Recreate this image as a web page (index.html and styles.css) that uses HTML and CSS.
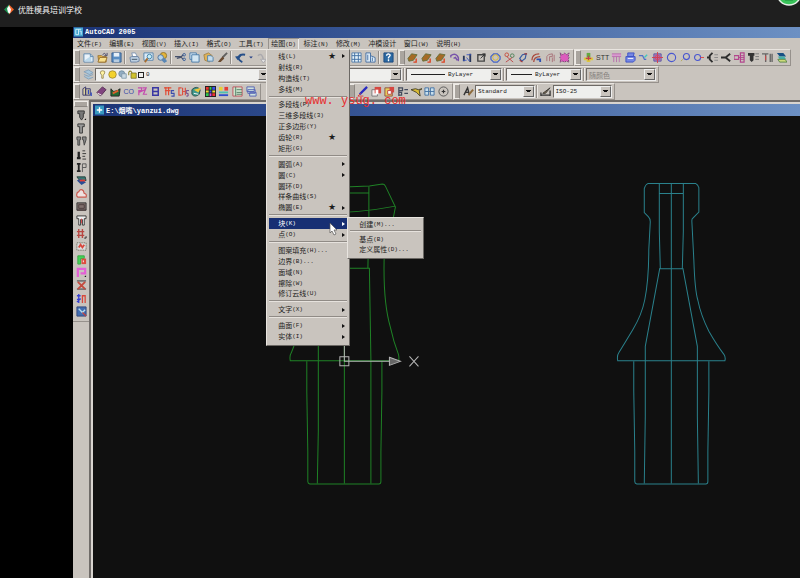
FILE: index.html
```html
<!DOCTYPE html>
<html lang="zh-CN">
<head>
    <meta charset="UTF-8">
    <meta name="viewport" content="width=device-width, initial-scale=1.0">
    <title>优胜模具培训学校</title>
    <link rel="stylesheet" href="styles.css">
</head>
<body>
    <header class="player-bar">
        <svg class="logo" viewBox="0 0 10 10"><path d="M5 0L0 5l5 5z" fill="#1c8f4d"/><path d="M5 0l5 5-5 5z" fill="#f0642a"/><path d="M5 1L3 4l1 4 2 1 1-4z" fill="#fff"/></svg>
        <h1>优胜模具培训学校</h1>
        <svg class="badge" viewBox="0 0 26 26"><circle cx="13" cy="13" r="12" fill="#39c35a" stroke="#e4efe6" stroke-width="1.5"/><path d="M9 20h8" stroke="#1f8a3a"/></svg>
    </header>

    <main class="app">
        <div class="title-bar">
            <svg class="app-icon" viewBox="0 0 10 10"><path d="M0 0h10v10H0z" fill="#43a4cf"/><path d="M2 2h3v6H2zM6 4h2v4M5 2h3" fill="none" stroke="#d8f3ff"/></svg>
            <span>AutoCAD 2005</span>
        </div>

        <nav class="menu-bar">
            <button>文件<small>(F)</small></button>
            <button>编辑<small>(E)</small></button>
            <button>视图<small>(V)</small></button>
            <button>插入<small>(I)</small></button>
            <button>格式<small>(O)</small></button>
            <button>工具<small>(T)</small></button>
            <div class="menu-anchor">
                <button class="open">绘图<small>(D)</small></button>
                <div class="menu draw-menu">
                    <button class="sub">线<small>(L)</small><i class="star">★</i></button>
                    <button>射线<small>(R)</small></button>
                    <button>构造线<small>(T)</small></button>
                    <button>多线<small>(M)</small></button>
                    <hr>
                    <button>多段线<small>(P)</small></button>
                    <button>三维多段线<small>(3)</small></button>
                    <button>正多边形<small>(Y)</small></button>
                    <button>齿轮<small>(R)</small><i class="star">★</i></button>
                    <button>矩形<small>(G)</small></button>
                    <hr>
                    <button class="sub">圆弧<small>(A)</small></button>
                    <button class="sub">圆<small>(C)</small></button>
                    <button>圆环<small>(D)</small></button>
                    <button>样条曲线<small>(S)</small></button>
                    <button class="sub">椭圆<small>(E)</small><i class="star">★</i></button>
                    <hr>
                    <button class="sub active">块<small>(K)</small></button>
                    <button class="sub">点<small>(O)</small></button>
                    <hr>
                    <button>图案填充<small>(H)...</small></button>
                    <button>边界<small>(B)...</small></button>
                    <button>面域<small>(N)</small></button>
                    <button>擦除<small>(W)</small></button>
                    <button>修订云线<small>(U)</small></button>
                    <hr>
                    <button class="sub">文字<small>(X)</small></button>
                    <hr>
                    <button class="sub">曲面<small>(F)</small></button>
                    <button class="sub">实体<small>(I)</small></button>
                    <div class="menu block-menu">
                        <button>创建<small>(M)...</small></button>
                        <hr>
                        <button>基点<small>(B)</small></button>
                        <button>定义属性<small>(D)...</small></button>
                    </div>
                    <svg class="pointer" viewBox="0 0 9 14"><path d="M1 1v10l2-2 2 4 2-1-2-4h3z" fill="#fff" stroke="#555" stroke-width=".7"/></svg>
                </div>
            </div>
            <button>标注<small>(N)</small></button>
            <button>修改<small>(M)</small></button>
            <button>冲模设计</button>
            <button>窗口<small>(W)</small></button>
            <button>说明<small>(H)</small></button>
        </nav>

        <div class="toolbar-row">
            <div class="toolbar standard">
                <button aria-label="新建"><svg viewBox="0 0 12 12"><path d="M1 2h7l3 3v6H1z" fill="#eaf3fa" stroke="#5c87ad"/><path d="M2 9l7-5v6H2z" fill="#b9d8eb"/><path d="M8 2v3h3" stroke="#5c87ad"/></svg></button>
                <button aria-label="打开"><svg viewBox="0 0 12 12"><path d="M1 4h4l1 1h4v6H2z" fill="#e9b649" stroke="#9b7432"/><path d="M3 6h8l-2 5H1z" fill="#f8df8c" stroke="#9b7432"/><path d="M6 3q2-3 4 0M11 1v3H8" stroke="#446"/></svg></button>
                <button aria-label="保存"><svg viewBox="0 0 12 12"><path d="M1 1h10v10H1z" fill="#5b8fc4" stroke="#385f91"/><path d="M3 1h6v4H3z" fill="#e6f0f8"/><path d="M3 8h6v3H3z" fill="#b8cce0"/></svg></button>
                <b class="sep"></b>
                <button aria-label="打印"><svg viewBox="0 0 12 12"><path d="M3 1h4l2 4H4z" fill="#fff" stroke="#7e95b3"/><path d="M1 6l2-1h7l1 2v3l-3 1H2z" fill="#bed0e2" stroke="#6a83a4"/><path d="M3 8h6" stroke="#456"/></svg></button>
                <button aria-label="预览"><svg viewBox="0 0 12 12"><path d="M1 1h10v8H1z" fill="#dceaf5" stroke="#5483ad"/><circle cx="7" cy="5" r="2.5" fill="#c6edf7" stroke="#4381aa"/><path d="M5 7l-3 4" stroke="#a56d31" stroke-width="2"/></svg></button>
                <button aria-label="发布"><svg viewBox="0 0 12 12"><circle cx="7" cy="4" r="3.5" fill="#e5b438" stroke="#8f752e"/><circle cx="4" cy="6" r="3" fill="#b4d3ec" stroke="#4e7199"/><path d="M5 9l3-3 3 4-3 2z" fill="#5a87b5"/></svg></button>
                <b class="sep"></b>
                <button aria-label="剪切"><svg viewBox="0 0 12 12"><path d="M0 5h6l3 3M2 7l4-1 3-3" stroke="#46516c" stroke-width="1.3"/><circle cx="10" cy="3" r="1.4" stroke="#375d99"/><circle cx="10" cy="8" r="1.4" stroke="#375d99"/></svg></button>
                <button aria-label="复制"><svg viewBox="0 0 12 12"><path d="M1 1h7v7H1z" fill="#dceaf5" stroke="#477aa8"/><path d="M3 3h8v8H3z" fill="#d2e5f2" stroke="#477aa8"/></svg></button>
                <button aria-label="粘贴"><svg viewBox="0 0 12 12"><path d="M1 3l5-2 4 3-3 7-5-2z" fill="#e0b359" stroke="#a5854b"/><path d="M5 4h4l2 2v4H5z" fill="#c5dcec" stroke="#5483ad"/></svg></button>
                <button aria-label="特性匹配"><svg viewBox="0 0 12 12"><path d="M11 1L6 6" stroke="#61605f" stroke-width="2"/><path d="M6 5l2 2-4 4H1q2-3 5-6z" fill="#6b4b31"/></svg></button>
                <b class="sep"></b>
                <button aria-label="放弃"><svg viewBox="0 0 12 12"><path d="M8 11Q3 9 4 5q2-3 7-2" stroke="#264f89" stroke-width="2"/><path d="M0 5l7-1-4 5z" fill="#264f89"/></svg></button>
                <button class="narrow" aria-label="放弃列表"><svg viewBox="0 0 6 12"><path d="M1 5h4L3 7z" fill="#223f87"/></svg></button>
                <button aria-label="重做"><svg viewBox="0 0 12 12"><path d="M2 4q5-4 6 5" stroke="#aaa9ad" stroke-width="1.5"/><path d="M5 8h6l-3 4z" fill="#e3e2e2" stroke="#aaa9ad"/></svg></button>
                <span class="fill"></span>
                <button aria-label="设计中心"><svg viewBox="0 0 12 12"><path d="M1 1h10v10H1z" fill="#e6f2fa" stroke="#557eaa"/><path d="M1 4h10M1 8h10M4 1v10M8 1v10" stroke="#3f6da1"/></svg></button>
                <button aria-label="工具选项板"><svg viewBox="0 0 12 12"><path d="M1 1h5v10H1zM6 4l5 2v5H6" fill="#deecf7" stroke="#446fa3"/><path d="M3 3v6M8 6v4" stroke="#446fa3"/></svg></button>
                <b class="sep"></b>
                <button aria-label="帮助"><svg viewBox="0 0 12 12"><path d="M1 1h10v10H1z" fill="#2b69a3" stroke="#1d487c"/><path d="M4 4q0-2 2-2 3 1 1 3L6 6v1M6 8v2" stroke="#fff" stroke-width="1.5"/></svg></button>
            </div>
            <div class="toolbar solids">
                <button aria-label="拉伸面"><svg viewBox="0 0 12 12"><path d="M1 7l4-5 6 1-4 6-5 1z" fill="#a66a25" stroke="#66713d"/><path d="M10 7v4H7" stroke="#dc4221" stroke-width="1.5"/></svg></button>
                <button aria-label="移动面"><svg viewBox="0 0 12 12"><path d="M1 7l4-5 6 1-4 6-5 1z" fill="#a66a25" stroke="#66713d"/><path d="M10 7v4H7" stroke="#dc4221" stroke-width="1.5"/></svg></button>
                <button aria-label="偏移面"><svg viewBox="0 0 12 12"><path d="M1 7l4-5 6 1-4 6-5 1z" fill="#a66a25" stroke="#66713d"/><path d="M10 7v4H7" stroke="#dc4221" stroke-width="1.5"/></svg></button>
                <button aria-label="圆角"><svg viewBox="0 0 12 12"><path d="M2 6V4q4-3 7 0 2 2 1 6M9 9L7 6 5 7" stroke="#7753aa" stroke-width="1.5"/></svg></button>
                <button aria-label="镜像"><svg viewBox="0 0 12 12"><path d="M2 4v6M9 2v9" stroke="#29375a" stroke-width="2"/><path d="M1 9h4M5 3h5M5 6l3 4" stroke="#3a55bf"/></svg></button>
                <button aria-label="缩放"><svg viewBox="0 0 12 12"><path d="M2 3h7v7H2z" stroke="#444" stroke-width="1.5"/><path d="M5 7l5-5M7 2h3v3" stroke="#333"/></svg></button>
                <button aria-label="八边形"><svg viewBox="0 0 12 12"><path d="M4 2h4l3 3v3l-3 3H4L1 8V5z" stroke="#4563c5" stroke-width="1.3"/><circle cx="6" cy="6" r="3" stroke="#d6b62e"/></svg></button>
                <button aria-label="修剪"><svg viewBox="0 0 12 12"><circle cx="3" cy="3" r="2" stroke="#c74d3b"/><circle cx="9" cy="4" r="2" stroke="#4b8156"/><path d="M3 5l7 6M9 6l-7 5" stroke="#bd4646"/></svg></button>
                <button aria-label="旋转"><svg viewBox="0 0 12 12"><path d="M3 7l3-4 4-1-1 5-4 3z" stroke="#385ca2" stroke-width="1.3"/><path d="M8 2h3M3 9l3 2" stroke="#a43b3b" stroke-width="1.3"/></svg></button>
                <button aria-label="偏移"><svg viewBox="0 0 12 12"><path d="M1 9q0-7 8-7M3 11q0-6 7-6" stroke="#a9493d" stroke-width="1.4"/><path d="M6 8h4v3" stroke="#2e51b0" stroke-width="2"/></svg></button>
                <button aria-label="阵列"><svg viewBox="0 0 12 12"><path d="M2 10V5q1-3 6-3v3H5v5M8 6v5M10 3v7" stroke="#a77177"/></svg></button>
                <button aria-label="分解"><svg viewBox="0 0 12 12"><path d="M1 1l3 2 2-2 2 2 3-2-1 4 1 1-1 2 1 3-3-1-2 1-2-1-3 1 1-3-1-2 1-2z" fill="#dc5bbd" stroke="#71446d" stroke-dasharray="2 1"/></svg></button>
            </div>
            <div class="toolbar dies">
                <button aria-label="模座"><svg viewBox="0 0 12 12"><path d="M1 6h10v3H8v2H4V9H1z" fill="#dcc940"/><path d="M4 1h4v5H4z" fill="#65a942"/><path d="M3 7h6M6 4v5" stroke="#c3404b" stroke-width="1.4"/></svg></button>
                <button class="stt">STT</button>
                <button aria-label="排样"><svg viewBox="0 0 12 12"><path d="M1 2h10v3H1z" fill="#d99bd0"/><path d="M1 2h10M1 5h10M3 5v6M6 5v6M9 5v6" stroke="#b96eae"/></svg></button>
                <button aria-label="出图"><svg viewBox="0 0 12 12"><path d="M3 1h7L9 5H3zM1 5h10v4l-2 2H1z" fill="#7587e4" stroke="#3d52c4"/><path d="M3 7h6" stroke="#fff"/></svg></button>
                <button aria-label="折弯"><svg viewBox="0 0 12 12"><path d="M1 4h4l2 4h2" stroke="#526fc8" stroke-width="1.3"/><path d="M7 6l3-3" stroke="#40c8be" stroke-width="1.5"/></svg></button>
                <button aria-label="孔表"><svg viewBox="0 0 12 12"><path d="M2 2h8v8H2z" fill="#b276b9" stroke="#5c5ea4"/><path d="M6 0v12M0 6h12" stroke="#d83c4b"/><path d="M4 4h4v4H4z" stroke="#c84a68"/></svg></button>
                <button aria-label="圆孔"><svg viewBox="0 0 12 12"><circle cx="6" cy="6" r="4.5" stroke="#4856d0" stroke-width="1.2"/></svg></button>
                <button aria-label="引线孔"><svg viewBox="0 0 12 12"><circle cx="7" cy="5" r="3.3" stroke="#4856d0" stroke-width="1.2"/><path d="M3 8l-2 2" stroke="#b2a952"/></svg></button>
                <button aria-label="销孔"><svg viewBox="0 0 12 12"><circle cx="5" cy="6" r="3.3" stroke="#4856d0" stroke-width="1.2"/><path d="M8 6h4" stroke="#d44"/></svg></button>
                <button aria-label="螺钉"><svg viewBox="0 0 12 12"><path d="M6 1L3 4v4l3 3M0 6h4" stroke="#2d2d2d" stroke-width="2"/><path d="M8 3h4M8 6h4M8 9h4" stroke="#888"/></svg></button>
                <button aria-label="弹簧"><svg viewBox="0 0 12 12"><path d="M10 2L5 6l5 4M0 6h7" stroke="#2d2d2d" stroke-width="2"/></svg></button>
                <button aria-label="导柱"><svg viewBox="0 0 12 12"><path d="M0 4h5v4H0zM7 1h4v10H7z" stroke="#b3458d" stroke-width="1.3"/><path d="M5 6h6M7 4h4M7 8h4" stroke="#b3458d"/></svg></button>
                <button aria-label="冲头"><svg viewBox="0 0 12 12"><path d="M0 1h7v3H6v5l-2 2-2-2V4H0z" fill="#333"/><path d="M8 2h4M8 5h4M8 8h4" stroke="#777"/></svg></button>
                <button aria-label="凸模"><svg viewBox="0 0 12 12"><path d="M0 2h7M4 2v9M9 2v9M11 2v9" stroke="#666" stroke-width="1.5"/><path d="M4 4v5" stroke="#d44"/></svg></button>
                <button aria-label="图层叠放"><svg viewBox="0 0 12 12"><path d="M1 1h7l3 4H4z" fill="#174f83"/><path d="M2 5h7l2 3H4z" fill="#45b0a9"/><path d="M2 8h8l2 3H4z" fill="#cddb7a" stroke="#598548"/></svg></button>
            </div>
        </div>

        <div class="toolbar-row">
            <div class="toolbar layers">
                <button aria-label="图层特性"><svg viewBox="0 0 12 12"><path d="M1 3l5-2 5 3-4 2zM1 6l5 2 5-2M1 8l5 3 5-2" fill="#a6c5db" stroke="#86a1b9"/></svg></button>
                <label class="combo layer-combo">
                    <svg viewBox="0 0 12 12"><path d="M6 1q4 0 3 3L7 7v4H5V7L3 4q0-3 3-3z" fill="#fff3a3" stroke="#8a7a48"/></svg>
                    <svg viewBox="0 0 12 12"><circle cx="6" cy="6" r="5" fill="#f3d22d" stroke="#9b812e"/></svg>
                    <svg viewBox="0 0 12 12"><circle cx="5" cy="5" r="4" fill="#92adc3" stroke="#6a8599"/><path d="M5 5h6v6H5z" fill="#cad9e3" stroke="#7891a4"/></svg>
                    <svg viewBox="0 0 12 12"><path d="M1 7V3q2-3 4 0v2" stroke="#8d8330" stroke-width="1.4"/><path d="M4 4h7v7H4z" fill="#d0c32d" stroke="#776e26"/></svg>
                    <b class="swatch"></b>
                    <select aria-label="图层"><option>0</option></select>
                </label>
            </div>
            <div class="toolbar properties">
                <label class="combo color-combo"><select aria-label="颜色"><option></option></select></label>
                <b class="sep"></b>
                <label class="combo type-combo"><span class="stroke"></span><select aria-label="线型"><option>ByLayer</option></select></label>
                <b class="sep"></b>
                <label class="combo weight-combo"><span class="stroke"></span><select aria-label="线宽"><option>ByLayer</option></select></label>
                <b class="sep"></b>
                <label class="combo plot-combo"><select aria-label="打印样式" disabled><option>随颜色</option></select></label>
            </div>
        </div>

        <div class="toolbar-row">
            <div class="toolbar die-tools">
                <button aria-label="图框"><svg viewBox="0 0 12 12"><path d="M1 3l3-2v9H1zM4 3h5v7H4z" fill="#dcd39e" stroke="#34336d"/><path d="M7 4v5M10 7v4" stroke="#334ac0" stroke-width="1.5"/></svg></button>
                <button aria-label="橡皮"><svg viewBox="0 0 12 12"><path d="M1 7l6-6 4 3-6 7z" fill="#80447f" stroke="#563053"/><path d="M2 8l4 2" stroke="#fff"/></svg></button>
                <button aria-label="图表"><svg viewBox="0 0 12 12"><path d="M1 3v8h9l1-8-3 2-4 1-2-2z" fill="#246b35" stroke="#222"/><path d="M3 8l6-3" stroke="#da5e2b" stroke-width="2"/></svg></button>
                <button class="co">CO</button>
                <button aria-label="文字"><svg viewBox="0 0 12 12"><path d="M1 2h4v3H2v5M6 2h4L7 9h4M2 7l7-3" stroke="#c34cae" stroke-width="1.3"/></svg></button>
                <button aria-label="胶片"><svg viewBox="0 0 12 12"><path d="M3 2h6v8H3zM3 6h6" stroke="#3936a3" stroke-width="1.6"/></svg></button>
                <button aria-label="冲裁"><svg viewBox="0 0 12 12"><path d="M0 2h8M1 5h6M2 1v9M5 1v9" stroke="#e04c35" stroke-width="1.3"/><path d="M11 5H8v3h3v3H8" stroke="#3b4cad" stroke-width="1.2"/></svg></button>
                <button aria-label="凹模"><svg viewBox="0 0 12 12"><path d="M4 2H1v8h3M5 2v8M8 2v8M5 6h3" stroke="#dd5040" stroke-width="1.3"/><path d="M12 5H9v3h2v3H9" stroke="#693f87"/></svg></button>
                <button aria-label="渲染"><svg viewBox="0 0 12 12"><path d="M1 4q5-5 9 0l-1 5q-5 4-8 0z" fill="#3f978c" stroke="#254d47"/><path d="M3 4l8-2-3 5z" fill="#edc63b"/><path d="M3 8l5 1" stroke="#fff"/></svg></button>
                <button aria-label="调色板"><svg viewBox="0 0 12 12"><path d="M0 0h12v12H0z" fill="#222"/><path d="M1 1h3v3H1zM8 8h3v3H8z" fill="#ed332f"/><path d="M5 1h2v3H5zM1 8h3v3H1z" fill="#2fc953"/><path d="M8 1h3v3H8zM5 5h2v2H5z" fill="#3950ef"/><path d="M1 5h3v2H1zM8 5h3v2H8z" fill="#efdb31"/><path d="M5 8h2v3H5z" fill="#dc48db"/></svg></button>
                <button aria-label="色条"><svg viewBox="0 0 12 12"><path d="M1 1h4v4H1z" fill="#e8cf35"/><path d="M7 1h4v4H7z" fill="#e33c35"/><path d="M1 7h10" stroke="#4ec0ae" stroke-width="2"/><path d="M1 10h10" stroke="#314ccc" stroke-width="2"/></svg></button>
                <button aria-label="明细表"><svg viewBox="0 0 12 12"><path d="M1 1h10v10H1z" fill="#cce3cd" stroke="#c34f5b"/><path d="M4 1v10M5 4h6M5 7h6M5 9h6" stroke="#547d65"/></svg></button>
                <button aria-label="窗口层叠"><svg viewBox="0 0 12 12"><path d="M1 1h8v5H1zM2 4h8v4H2zM4 7h7v4H4z" fill="#cfe2dd" stroke="#5362b5"/></svg></button>
            </div>
            <div class="toolbar edit-tools">
                <button aria-label="画笔"><svg viewBox="0 0 12 12"><path d="M11 1L3 9" stroke="#292ac0" stroke-width="2.5"/><path d="M1 11l3-3M1 11h6" stroke="#d63b39"/></svg></button>
                <button aria-label="复制块"><svg viewBox="0 0 12 12"><path d="M1 4h6v7H1z" fill="#f4eded" stroke="#777"/><path d="M4 1h7v7H4z" fill="#d54741"/><path d="M5 4h3v5H5z" fill="#fff"/></svg></button>
                <button aria-label="粘贴块"><svg viewBox="0 0 12 12"><path d="M1 2h8v9H1z" fill="#e5cd5c" stroke="#8d5140"/><path d="M6 1h5v6H6z" fill="#d54741"/><path d="M4 5h4v4H4z" fill="#fff" stroke="#b44"/></svg></button>
                <button aria-label="对齐"><svg viewBox="0 0 12 12"><path d="M2 1v10M2 2h4v3H2M2 7h3v3H2M8 4h4M8 8h4" stroke="#454c5d" stroke-width="1.4"/></svg></button>
                <button aria-label="拾取"><svg viewBox="0 0 12 12"><path d="M0 4l5-1 3 1 4-1-3 2 1 6-4-4z" fill="#d9bb36" stroke="#454129"/></svg></button>
                <button aria-label="对称"><svg viewBox="0 0 12 12"><path d="M1 2h4v8H1zM7 2h4v8H7zM1 6h10" fill="#c8dfed" stroke="#4472a3"/></svg></button>
                <button aria-label="圆心"><svg viewBox="0 0 12 12"><circle cx="6" cy="6" r="5" stroke="#555"/><path d="M6 4v4M4 6h4" stroke="#333" stroke-width="1.3"/></svg></button>
            </div>
            <div class="toolbar style-tools">
                <button aria-label="文字样式"><svg viewBox="0 0 12 12"><path d="M1 10l4-8 2 8M3 7h4" stroke="#333" stroke-width="1.5"/><path d="M11 4L6 10" stroke="#8d6a3a" stroke-width="2"/></svg></button>
                <label class="combo"><select aria-label="文字样式列表"><option>Standard</option></select></label>
                <b class="sep"></b>
                <button aria-label="标注样式"><svg viewBox="0 0 12 12"><path d="M1 7v4M11 5v6M1 10h10" stroke="#333" stroke-width="1.4"/><path d="M11 2L6 8H3z" fill="#806c4e" stroke="#3c3b38"/></svg></button>
                <label class="combo"><select aria-label="标注样式列表"><option>ISO-25</option></select></label>
            </div>
        </div>

        <div class="workspace">
            <aside class="dock">
                <button aria-label="圆冲头"><svg viewBox="0 0 12 12"><path d="M2 1h7v3H8v4l-2 3-2-3V4H2z" fill="#777" stroke="#333"/><path d="M9 11h2V9z" fill="#111"/></svg></button>
                <button aria-label="方冲头"><svg viewBox="0 0 12 12"><path d="M2 1h7v3H7v7H4V4H2z" fill="#999" stroke="#333"/></svg></button>
                <button aria-label="双冲头"><svg viewBox="0 0 12 12"><path d="M1 1h4v3H4v6H2V4H1zM7 1h4v3l-2 6-1-6H7z" fill="#888" stroke="#444"/></svg></button>
                <button aria-label="导正销"><svg viewBox="0 0 12 12"><path d="M1 10h4M3 3v7" stroke="#222" stroke-width="2.5"/><path d="M7 2h3M7 5h4M7 8h3M7 11h4" stroke="#333"/></svg></button>
                <button aria-label="浮料销"><svg viewBox="0 0 12 12"><path d="M1 2h4M3 2v8M1 10h4" stroke="#222" stroke-width="2"/><path d="M7 11V2h4v4H7" stroke="#555"/></svg></button>
                <button aria-label="模板"><svg viewBox="0 0 12 12"><path d="M1 2h9l1 4H4z" fill="#397a74" stroke="#27413d"/><path d="M1 6l4-2 6 4-5 3z" fill="#294d94"/><path d="M4 6h6" stroke="#df3d35" stroke-width="2"/></svg></button>
                <button aria-label="外形"><svg viewBox="0 0 12 12"><path d="M1 9q-1-4 2-5 2-4 5-1l1 3q3 0 2 4H2z" fill="#eee1df" stroke="#ca594e" stroke-width="1.3"/></svg></button>
                <button aria-label="材料"><svg viewBox="0 0 12 12"><path d="M1 2h10v8H1z" fill="#81716f" stroke="#333"/><path d="M3 4h6v4H3zM1 10h10" stroke="#4b3d3d"/></svg></button>
                <button aria-label="成形"><svg viewBox="0 0 12 12"><path d="M1 1h10v3H9v7H7V5H5v6H3V4H1z" fill="#eee" stroke="#333"/><path d="M6 4v5" stroke="#d44"/></svg></button>
                <button aria-label="切边"><svg viewBox="0 0 12 12"><path d="M3 1v10M7 1v10M1 4h8M1 8h8" stroke="#b84742" stroke-width="1.5"/><path d="M11 9v2H9" stroke="#222"/></svg></button>
                <button aria-label="料带"><svg viewBox="0 0 12 12"><path d="M1 2h10v8H1z" fill="#ddd" stroke="#554" stroke-dasharray="1 1"/><path d="M3 7l2-3 2 3 2-3" stroke="#d8483e" stroke-width="2"/></svg></button>
                <button aria-label="型腔"><svg viewBox="0 0 12 12"><path d="M2 11V2h7v3H5v6z" fill="#43d556" stroke="#38a644"/><path d="M6 5h5v6H6z" fill="#de4c3e"/><path d="M8 7v2" stroke="#fff"/></svg></button>
                <button aria-label="型芯"><svg viewBox="0 0 12 12"><path d="M2 11V2h8v5H5" stroke="#e45fd6" stroke-width="2.4"/><path d="M9 11h2V9z" fill="#111"/></svg></button>
                <button aria-label="删除"><svg viewBox="0 0 12 12"><path d="M1 1h10M1 10h10" stroke="#777" stroke-width="2"/><path d="M2 2l8 8M10 2l-8 8" stroke="#c44b3e" stroke-width="2"/></svg></button>
                <button aria-label="编号"><svg viewBox="0 0 12 12"><path d="M1 3h4M3 1v10M1 7h4M1 10l4-4" stroke="#353ed0" stroke-width="1.4"/><path d="M7 11V3h3v8" stroke="#d6493d" stroke-width="1.4"/></svg></button>
                <button aria-label="查看"><svg viewBox="0 0 12 12"><path d="M1 1h10v10H1z" fill="#426eb1" stroke="#33477b"/><path d="M3 3l4 4 3-3" stroke="#b8dcec" stroke-width="1.5"/><path d="M7 7l4 4" stroke="#b44" stroke-width="1.5"/></svg></button>
            </aside>

            <section class="document">
                <div class="document-title">
                    <svg viewBox="0 0 10 10"><path d="M0 0h10v10H0z" fill="#3799c0"/><path d="M2 5h6M5 2v6" stroke="#fff" stroke-width="1.5"/></svg>
                    <span>E:\烟嘴\yanzui.dwg</span>
                </div>
                <div class="canvas">
                    <svg class="drawing" viewBox="94 116 706 462" preserveAspectRatio="xMinYMin slice">
                        <!-- left part -->
                        <g class="green">
                            <path d="M320 188l50-2 13-2q2 0 3 2l10 21-2 10M320 193h50M320 213q40 0 76-7M369.500 186v31l-1 51M320 268h50l1.500 90v125"/>
                            <path d="M385 250q-2 50 6 77 3 14 8 27 1 4 0 6.500H291q-1-5 1-8 3-7 4-12M345 184v299M319 340v90l-1 53"/>
                            <path d="M307.500 361v30l1 60v30q0 2 2 2.500h69q2 0 2-2.500v-30l1-60v-30"/>
                        </g>
                        <!-- right part -->
                        <g class="cyan">
                            <path d="M648 183.500h48q2 1 3 4V212l-6 6q-1 0-1 3l2 39q1 30 4 40 3 15 11 31 8 14 15 23 2 3 1 6.500H618q-1-5 1-8 5-8 14-23 9-15 12-30 4-20 4-50l1.500-28q0-3-2-5l-4-4v-24q1-4 3.500-5z"/>
                            <path d="M659.500 184v47l1 37M683.500 184v47l-1 37M660 193.500h23M660 268.500h23M671.500 184v299"/>
                            <path d="M660 268l-14.500 78v70l-1 67M683 268l14.500 78v70l1 67"/>
                            <path d="M634 361v30l1 60v30q0 2 2 2.500h69q2 0 2-2.500v-30l1-60v-30"/>
                        </g>
                        <!-- UCS icon -->
                        <g class="ucs">
                            <path d="M340.500 356.500h9v9h-9zM345 344v17h46M410 356l9 10M419 356l-9 10"/>
                            <path d="M390 357l11 4-11 4z" fill="#666"/>
                        </g>
                    </svg>
                </div>
            </section>
        </div>
        <p class="watermark">www. ysug. com</p>
    </main>
</body>
</html>
```

FILE: styles.css
```css
* {
    margin: 0;
    padding: 0;
    box-sizing: border-box;
}

body {
    display: flex;
    flex-direction: column;
    height: 100vh;
    overflow: hidden;
    background: #000;
    color: #1c1c1c;
    font: 7px/11px "Noto Sans CJK SC", sans-serif;
}

button,
select {
    border: 0;
    border-radius: 0;
    background: none;
    color: inherit;
    font: inherit;
}

small {
    font: 6px/11px "Liberation Mono", monospace;
}

svg {
    display: block;
    flex: none;
    fill: none;
}

.player-bar {
    position: relative;
    display: flex;
    gap: 4px;
    height: 27px;
    padding: 4px;
    background: #1f1f1f;
    color: #f2f2f2;
}

.player-bar h1 {
    font-size: 8px;
    font-weight: 400;
    line-height: 11px;
}

.logo {
    width: 10px;
    height: 11px;
}

.badge {
    position: absolute;
    top: -20px;
    right: -2px;
    width: 26px;
    height: 26px;
}

.app {
    position: relative;
    display: flex;
    flex: 1;
    flex-direction: column;
    min-height: 0;
    margin-left: 73px;
    background: #c9c4be;
}

.title-bar,
.document-title {
    display: flex;
    gap: 2px;
    height: 11px;
    padding-left: 1px;
    background: linear-gradient(90deg, #1c3476, #2f4d8e 30%, #6c90c3);
    color: #fff;
    font: bold 7px/11px "Liberation Mono", "Noto Sans CJK SC", monospace;
}

.title-bar svg,
.document-title svg {
    width: 9px;
    height: 10px;
}

/* menus */
.menu-bar {
    display: flex;
    justify-content: space-between;
    width: 391px;
    height: 11px;
    padding-left: 1px;
}

.menu-bar button {
    flex: none;
    height: 11px;
    padding: 0 3px;
    white-space: nowrap;
}

.menu-anchor {
    position: relative;
}

.menu-anchor > .open {
    box-shadow: inset 1px 1px #98938e, inset -1px 0 #eee;
}

.menu {
    position: absolute;
    z-index: 2;
    display: flex;
    flex-direction: column;
    padding: 1px 2px 3px;
    border: 1px solid;
    border-color: #e8e4df #6b6864 #6b6864 #e8e4df;
    background: #c9c4be;
}

.menu hr {
    flex: none;
    height: 2px;
    margin: 1px 0 2px;
    border: 0;
    border-top: 1px solid #908b86;
    border-bottom: 1px solid #e6e2dd;
}

.menu button {
    display: flex;
    flex: 1;
    align-items: center;
    width: 100%;
    min-height: 0;
    padding: 0 2px 0 9px;
}

.draw-menu {
    top: 11px;
    left: -2px;
    width: 84px;
    height: 297px;
}

.star {
    margin-left: auto;
    padding-right: 9px;
    font: 9px/9px "DejaVu Sans", sans-serif;
}

.sub::after {
    content: "";
    margin-left: auto;
    border: 2px solid transparent;
    border-right: 0;
    border-left: 3px solid #111;
}

.sub:has(.star)::after {
    margin-left: 0;
}

.sub .star {
    padding-right: 6px;
}

.menu .active {
    background: #172f73;
    color: #fff;
}

.active::after {
    border-left-color: #fff;
}

.block-menu {
    top: 167px;
    left: 80px;
    width: 77px;
    height: 42px;
}

.pointer {
    position: absolute;
    top: 172px;
    left: 62px;
    width: 9px;
    height: 14px;
}

/* toolbars */
.toolbar-row {
    display: flex;
    height: 17px;
}

.toolbar {
    display: flex;
    flex: none;
    align-items: center;
    padding-right: 2px;
    border: 1px solid;
    border-color: #e9e5e0 #96918c #96918c #e9e5e0;
}

.toolbar::before {
    content: "";
    flex: none;
    width: 4px;
    height: 13px;
    margin-right: 1px;
    border: 1px solid #eeebe7;
    border-right-color: #8c8782;
    background: #aaa59f;
}

.toolbar button {
    display: flex;
    flex: 1;
    justify-content: center;
    min-width: 0;
}

.toolbar svg,
.dock svg {
    width: 11px;
    height: 11px;
}

.sep {
    flex: none;
    width: 2px;
    height: 13px;
    margin: 0 1px;
    border-left: 1px solid #928d88;
    border-right: 1px solid #ece8e4;
}

.standard {
    width: 325px;
}

.standard button {
    flex: 0 0 14px;
}

.standard .narrow {
    flex-basis: 7px;
}

.standard .narrow svg {
    width: 6px;
}

.fill {
    flex: 1;
}

.solids {
    width: 176px;
}

.dies {
    width: 217px;
}

.toolbar .stt,
.toolbar .co {
    color: #333;
    font: 7px/11px "Liberation Sans", sans-serif;
}

.toolbar .co {
    color: #3a4aa8;
}

.layers {
    width: 200px;
}

.layers button,
.style-tools button {
    flex: 0 0 14px;
}

.properties {
    width: 386px;
}

.die-tools {
    width: 188px;
}

.edit-tools {
    width: 105px;
    margin-left: 87px;
}

.style-tools {
    width: 162px;
}

.combo {
    display: flex;
    flex: 1;
    align-items: center;
    height: 13px;
    min-width: 0;
    padding: 1px 0 1px 1px;
    border: 1px solid;
    border-color: #6e6a66 #eee #eee #6e6a66;
    background: #efefed;
}

.combo::after {
    content: "";
    flex: none;
    width: 9px;
    height: 9px;
    border: 1px solid;
    border-color: #eee #666 #666 #eee;
    background: linear-gradient(#111, #111) 50% 3px / 5px 1px no-repeat, linear-gradient(#111, #111) 50% 4px / 3px 1px no-repeat, #c9c4be;
}

.combo select {
    flex: 1;
    min-width: 0;
    height: 10px;
    padding-left: 1px;
    appearance: none;
    font: 6px/10px "Liberation Mono", monospace;
}

.layer-combo {
    gap: 1px;
    padding-left: 2px;
}

.layer-combo svg {
    width: 9px;
    height: 9px;
}

.swatch {
    width: 6px;
    height: 6px;
    border: 1px solid #222;
}

.stroke {
    flex: 1;
    height: 1px;
    margin: 0 2px 0 3px;
    background: #222;
}

.type-combo .stroke {
    flex: none;
    width: 34px;
}

.weight-combo .stroke {
    flex: none;
    width: 21px;
}

.color-combo {
    flex: 0 0 121px;
}

.type-combo {
    flex: 0 0 96px;
}

.weight-combo {
    flex: 0 0 76px;
}

.properties .plot-combo {
    background: #c9c4be;
}

.properties .plot-combo select {
    color: #85817d;
    opacity: 1;
    font: 7px/10px "Noto Sans CJK SC", sans-serif;
}

/* drawing window */
.workspace {
    display: flex;
    flex: 1;
    min-height: 0;
}

.dock {
    display: flex;
    flex: none;
    flex-direction: column;
    align-items: center;
    align-self: flex-start;
    width: 16px;
    height: 222px;
    padding-bottom: 3px;
    border-bottom: 1px solid #96918c;
}

.dock::before {
    content: "";
    width: 12px;
    height: 4px;
    margin: 1px 0 2px;
    border: 1px solid #eeebe7;
    border-bottom-color: #8c8782;
    background: #aaa59f;
}

.dock button {
    display: flex;
    flex: 1;
    align-items: center;
}

.document {
    display: flex;
    flex: 1;
    flex-direction: column;
    min-width: 0;
    padding: 2px 0 0 2px;
    border-top: 2px solid #706c69;
    border-left: 2px solid #706c69;
    background: #d8d4cf;
}

.document-title {
    flex: none;
    height: 12px;
    line-height: 12px;
    padding: 1px 0 0 2px;
}

.canvas {
    flex: 1;
    min-height: 0;
    overflow: hidden;
    background: #101010;
}

.drawing {
    width: 100%;
    height: 100%;
}

.green {
    stroke: #1f8226;
}

.cyan {
    stroke: #2a818c;
}

.ucs {
    stroke: #b5b5b5;
}

.watermark {
    position: absolute;
    z-index: 3;
    top: 67px;
    left: 232px;
    color: #e62e2e;
    font: 12px/14px "Liberation Mono", monospace;
    white-space: pre;
}
```
